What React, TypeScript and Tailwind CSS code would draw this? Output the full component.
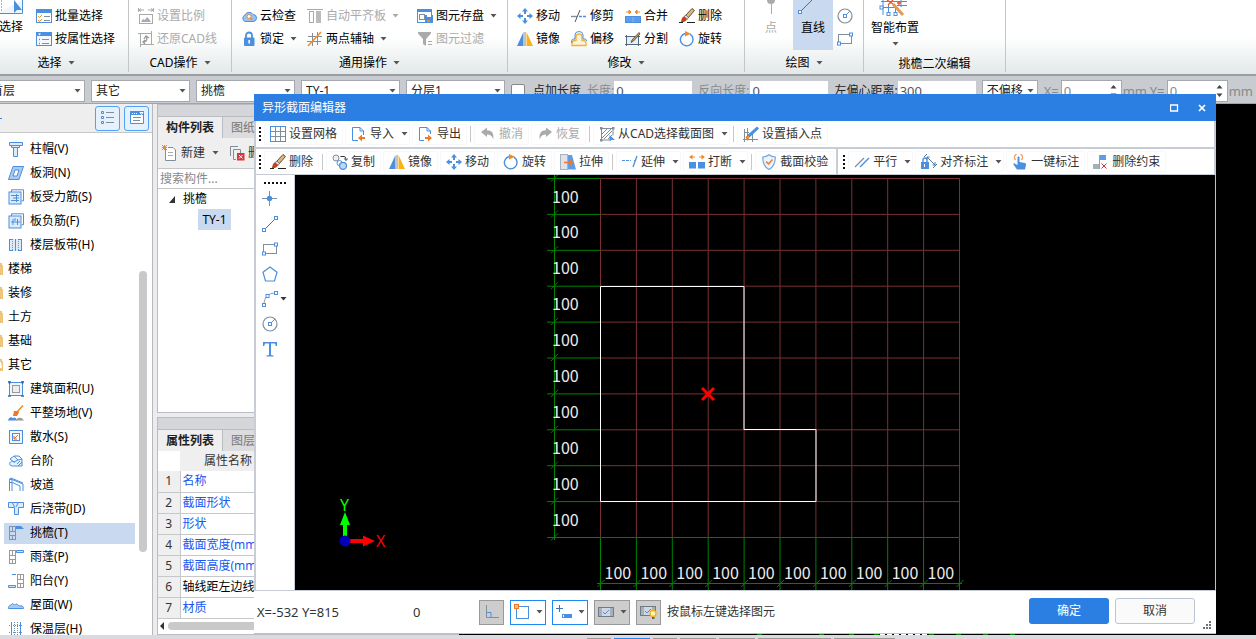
import React from "react";

const B = "#4a8fe0";
const G = "#7f8f9c";
const O = "#f08a24";

const node = (x: number, y: number) => (
  <rect x={x - 1.5} y={y - 1.5} width="3" height="3" fill="#fff" stroke={B} key={`${x}-${y}`} />
);

const ICONS: Record<string, React.ReactNode> = {
  batch: (
    <>
      <rect x=".5" y="1.5" width="15" height="13" fill="#fff" stroke={B} />
      <rect x="0" y="1" width="16" height="4" fill={B} />
      <path d="M2 8l1.5 1.5L6 7M2 12l1.5 1.5L6 11" fill="none" stroke={O} />
      <path d="M8 8.5h6M8 12.5h6" stroke={G} />
    </>
  ),
  byAttr: (
    <>
      <rect x=".5" y="1.5" width="15" height="13" fill="#f4f8fd" stroke={B} />
      <rect x="0" y="1" width="16" height="4" fill={B} />
      <path d="M2 2.5h3L3.500 4.500z" fill="#fff" />
      <path d="M6 8.500h7M6 12.500h7" stroke={G} />
      <path d="M3 8.500h1M3 12.500h1" stroke={B} strokeWidth="1.500" />
    </>
  ),
  scale: (
    <>
      <path d="M.5 0v4M15.500 0v4M1 2h5M10 2h5M3 .5L1 2l2 1.500M13 .5L15 2l-2 1.500" fill="none" stroke="#aaa" />
      <rect x="1.500" y="6.500" width="13" height="9" fill="#fff" stroke="#aaa" />
      <path d="M3 14l2-3 2 1 2-3 2 2 2 3z" fill="#aaa" />
    </>
  ),
  restore: (
    <>
      <path d="M2.500 2v14M13.500 0v14M0 2.500h14M2 13.500h14" stroke="#aaa" />
      <path d="M5 11c5 0 4-5 3-6M6 8l2-3 3 2M7 9l-2 2 2 2" fill="none" stroke="#999" strokeWidth="1.300" />
    </>
  ),
  cloud: (
    <>
      <path d="M4 13.500a3.500 3.500 0 0 1 0-6.500 4.500 4.500 0 0 1 8-.5 3.500 3.500 0 0 1 0 7z" fill="#9cc4f2" stroke={B} />
      <circle cx="8" cy="8.500" r="2" fill="#fff" stroke={O} />
      <path d="M9.500 10l2 2" stroke={O} strokeWidth="1.300" />
    </>
  ),
  lock: (
    <>
      <path d="M5 7V4.500a3 3 0 0 1 6 0V7" fill="none" stroke={B} strokeWidth="1.800" />
      <rect x="3" y="6.500" width="10.500" height="8.500" rx="1" fill={B} />
      <path d="M8.200 9v3.500" stroke="#fff" strokeWidth="1.600" />
    </>
  ),
  alignSlab: (
    <>
      <path d="M0 1.500h16" stroke="#aaa" />
      <rect x="2.500" y="3.500" width="4" height="11" fill="#fff" stroke="#aaa" />
      <rect x="9" y="3" width="5" height="12" fill="#bbb" />
    </>
  ),
  axis: (
    <>
      <path d="M5.500 2v13M10.500 1v13M1 5.500h14M0 10.500h14" stroke={G} fill="none" />
      <path d="M1 15L14 1" stroke={O} strokeWidth="1.400" />
    </>
  ),
  save: (
    <>
      <rect x=".5" y="1.500" width="14" height="13" fill="#fff" stroke={B} />
      <rect x="0" y="1" width="15" height="3" fill={B} />
      <rect x="2.500" y="6.500" width="5" height="5" fill="none" stroke={G} />
      <rect x="8" y="7" width="8" height="8" fill={B} />
      <rect x="10" y="7" width="4" height="2" fill="#fff" />
      <rect x="10" y="12" width="3" height="2" fill={O} />
    </>
  ),
  filter: (
    <>
      <path d="M1 1h13v1.500L9 8v7l-3-2V8L1 2.500z" fill="#aaa" />
      <path d="M11 10.500h4M11 13.500h4" stroke="#aaa" />
    </>
  ),
  move: (
    <>
      <path d="M8 0l3 3.500H9V6H7V3.500H5zM8 16l3-3.500H9V10H7v2.500H5zM0 8l3.500-3v2H6v2H3.500v2zM16 8l-3.500-3v2H10v2h2.500v2z" fill={B} />
    </>
  ),
  trim: (
    <>
      <path d="M0 8.500h6" stroke={G} strokeWidth="1.400" />
      <path d="M4 14L9 2" stroke="#555" />
      <path d="M8 8.500h8" stroke={B} strokeWidth="1.400" strokeDasharray="3 1" />
    </>
  ),
  merge: (
    <>
      <path d="M1 4h4M4 2l2 2-2 2zM15 4h-4M12 2l-2 2 2 2z" stroke={O} fill={O} />
      <rect x=".5" y="8.500" width="15" height="6" fill="#5b9de8" stroke={B} />
      <path d="M8 9v5" stroke="#85b8f0" />
    </>
  ),
  brush: (
    <>
      <path d="M13 .5l2.500 2L9 10 6.500 7.500z" fill="#d8b886" stroke="#6b4a2b" />
      <path d="M7 7l2.500 2.500L8 11.500 5 8.500z" fill="#ddd" stroke="#555" strokeWidth=".7" />
      <path d="M5.200 8.300l3 3C6.500 14 4 14.500 2 14c.3-2.500 1-4.500 3.200-5.700z" fill="#c4411e" />
      <path d="M0 14.500h4M8 14.500h8" stroke="#222" />
    </>
  ),
  mirror: (
    <>
      <path d="M6.500 1v14H0z" fill={B} />
      <path d="M8 1v14" stroke="#888" />
      <path d="M9.500 1v14H16z" fill="#f7b21c" />
    </>
  ),
  offset: (
    <>
      <path d="M1 14.500h14v-2a3 3 0 0 0-3-3h-1V6a3 3 0 1 0-6 0v3.500H4a3 3 0 0 0-3 3z" fill="#fdf3dc" stroke="#f2b432" strokeWidth="1.300" />
      <path d="M.7 12V10a2 2 0 0 1 2-2H4V4a4 3.500 0 0 1 8 0v4h2a2 2 0 0 1 1.500 2" fill="none" stroke={B} />
    </>
  ),
  split: (
    <>
      <rect x="1.500" y="5.500" width="12" height="8" fill="#e4eefa" stroke="#52687c" />
      <path d="M0 5.500h15M1.500 4v11M13.500 4v11M0 13.500h16" stroke="#52687c" />
      <path d="M14 1.500L7 9l-1 2.500L8.500 10 15 3z" fill="#c59a5f" stroke="#444" strokeWidth=".8" />
    </>
  ),
  rotate: (
    <>
      <path d="M11 3.200A6.300 6.300 0 1 1 6 2.500" fill="none" stroke={B} strokeWidth="1.400" />
      <path d="M6 0l6 2.700L6 5.500z" fill={O} />
    </>
  ),
  circle: (
    <>
      <circle cx="8" cy="8" r="7" fill="none" stroke={G} strokeWidth="1.200" />
      <path d="M8 8l5-5" stroke={G} />
      {node(8, 8)}
    </>
  ),
  rect: (
    <>
      <rect x="1.500" y="3.500" width="13" height="9" fill="none" stroke={G} />
      {node(14, 3.5)}
      {node(2, 12.5)}
    </>
  ),
  line: (
    <>
      <path d="M1.500 14.500l13-13" stroke="#666" />
      {node(2, 14)}
      {node(14, 2)}
    </>
  ),
  point: (
    <>
      <path d="M7.500 0v5M7.500 10v5M0 7.500h5M10 7.500h5" stroke={G} />
      <circle cx="7.500" cy="7.500" r="2.700" fill={B} />
    </>
  ),
  pentagon: <path d="M8 1l7 5.200L12.500 15h-9L1 6.200z" fill="none" stroke={B} strokeWidth="1.200" />,
  arc: (
    <>
      <path d="M2 14C2 6 6 2 14 2" fill="none" stroke="#999" />
      {node(2, 14)}
      {node(5.5, 5)}
      {node(14, 2)}
    </>
  ),
  textTool: <path d="M1 5V1h14v4h-1.200L13 2.500H9V14l2.500.5v1h-7v-1L7 14V2.500H3L2.200 5z" fill={B} />,
  grid: (
    <>
      <rect x=".5" y=".5" width="15" height="15" fill="#fff" stroke={B} />
      <path d="M5.500 1v14M10.500 1v14M1 5.500h14M1 10.500h14" stroke={G} />
      <rect x=".5" y=".5" width="15" height="15" fill="none" stroke={B} />
    </>
  ),
  importI: (
    <>
      <path d="M7 14.500H1.500v-13H9L12.500 5v4" fill="#fff" stroke={B} />
      <path d="M9 1.500V5h3.500" fill="none" stroke={B} />
      <path d="M7 12l4-3.500V11h3v2h-3v2.500z" fill="#f07826" />
    </>
  ),
  exportI: (
    <>
      <path d="M6 14.500H1.500v-13H9L12.500 5v3" fill="#fff" stroke={B} />
      <path d="M9 1.500V5h3.500" fill="none" stroke={B} />
      <path d="M14 12l-4-3.500V11H7v2h3v2.500z" fill="#f07826" />
    </>
  ),
  undo: <path d="M1 6l6-4.500V4.300c5 0 7 3 6.300 9C12 9.800 10 8.500 7 8.500V11z" fill="#aaa" />,
  redo: <path d="M15 6L9 1.500V4.300c-5 0-7 3-6.300 9C4 9.800 6 8.500 9 8.500V11z" fill="#aaa" />,
  cadPick: (
    <>
      <path d="M2.500 2v12h8M2 2.500h12v7" fill="none" stroke={G} />
      <path d="M3 8l5-5M3 12l9-9M5 13l8-8M9 13l4-4" stroke={G} />
      <rect x="1" y="1" width="2.500" height="2.500" fill={G} />
      <rect x="13" y="1" width="2.500" height="2.500" fill={G} />
      <rect x="1" y="13" width="2.500" height="2.500" fill={G} />
      <path d="M10.500 9v6.500l2-1.500H16z" fill={B} />
    </>
  ),
  insertPt: (
    <>
      <path d="M4.500 2v12.500M9.500 8v8M1 6.500h5M0 13.500h15M1.500 3v13" stroke={G} fill="none" />
      <path d="M14 .5l2 2L7 11l-3 1 1-3.500z" fill={B} />
      <circle cx="4.500" cy="11.500" r="1.800" fill={O} />
    </>
  ),
  copy: (
    <>
      <circle cx="4" cy="4" r="3" fill="#eee" stroke={G} />
      <path d="M8.500 2.500H12q2 0 2 3M12.300 4.500L14 6.500l1.800-2" fill="none" stroke="#333" />
      <circle cx="7.500" cy="9" r="2.500" fill="#fff" stroke={B} />
      <circle cx="11" cy="11.800" r="3.500" fill="#bcd8f6" stroke={B} strokeWidth="1.300" />
    </>
  ),
  stretch: (
    <>
      <rect x=".5" y=".5" width="7" height="15" fill="#dfe3e8" stroke="#a9b3bd" />
      <path d="M8 1h4l4 14.500H8z" fill="#5b9de8" />
      <path d="M4 8.500h8M9.500 6l2.500 2.500L9.500 11" fill="none" stroke="#f07826" strokeWidth="1.400" />
    </>
  ),
  extend: (
    <>
      <path d="M0 6.500h9" stroke={B} strokeDasharray="3 1" />
      <path d="M12 6.500h2" stroke={G} />
      <path d="M11 13l4-11" stroke={B} strokeWidth="1.300" />
    </>
  ),
  brk: (
    <>
      <path d="M2.500 3H6M10 3h3.500" stroke={O} />
      <path d="M3.500 .5v5L0 3zM12.500 .5v5L16 3z" fill={O} />
      <rect x="0" y="8" width="7" height="6.500" fill={B} />
      <rect x="9" y="8" width="7" height="6.500" fill={B} />
    </>
  ),
  shield: (
    <>
      <path d="M8 .8c2 1.700 4 2.200 6.300 2.200 0 6-1.300 10-6.300 12.500C3 13 1.700 9 1.700 3 4 3 6 2.500 8 .8z" fill="#edf4fc" stroke="#6fa5e2" strokeWidth="1.200" />
      <path d="M5 7.500L7.500 10 11.500 5.500" fill="none" stroke="#f07826" strokeWidth="1.500" />
    </>
  ),
  parallel: (
    <>
      <path d="M1 13L10 4" stroke={G} strokeWidth="1.300" />
      <path d="M6 13l9-9" stroke={B} strokeWidth="1.500" />
    </>
  ),
  alignDim: (
    <>
      <rect x="0" y="8" width="8" height="7" fill={B} />
      <path d="M2 8V6a2 2 0 0 1 4 0v2" fill="none" stroke={B} strokeWidth="1.400" />
      <path d="M3.500 10v3" stroke="#fff" />
      <path d="M3 3L6 0M6 3l8 8M6 5.500V3h2.500M14 8v3h-2.500M12 14l4-4" fill="none" stroke="#52789f" />
    </>
  ),
  hand: (
    <>
      <path d="M3.500 6A4 4 0 1 1 9.500 6" fill="none" stroke="#f2a06a" strokeWidth="1.400" />
      <path d="M5.500 3.500c0-1.300 2-1.300 2 0V8l5.500 1c1 .3 1 1 1 2l-1 4.500H5L1.500 10.500c-.5-1 .5-1.500 1.500-.8L5.500 11z" fill={B} />
    </>
  ),
  delCon: (
    <>
      <rect x="7" y="1" width="6" height="5" fill="#5b9de8" />
      <rect x="0" y="10" width="6" height="5" fill="#a9afb8" />
      <path d="M6.500 1v14" stroke={O} />
      <path d="M8.500 9.500l5 5M13.500 9.500l-5 5" stroke="#c33" />
    </>
  ),
  colCap: (
    <path d="M1.500 1.500h13v3h-3v2h-2v9h-4v-9h-2v-2h-2zM3 4.500h9M5 6.500h5" fill="#dceafa" stroke={B} />
  ),
  slabHole: (
    <>
      <path d="M5 1.500h10.500L11 14.500H.5z" fill="#a9cbf2" stroke={B} />
      <path d="M7 5h4l-2 6H5z" fill="#fff" stroke={B} />
    </>
  ),
  rebar1: (
    <>
      <path d="M3.500 3V.8h12v11h-2" fill="none" stroke={B} />
      <rect x="1" y="3" width="12" height="12" fill="#dceafa" stroke={B} />
      <path d="M3 6.500h8M3 11.500h8M5 9h6M8.500 5v8" stroke={B} />
    </>
  ),
  rebar2: (
    <>
      <path d="M3.500 3V.8h12v11h-2" fill="none" stroke={B} />
      <rect x="1" y="3" width="12" height="12" fill="#dceafa" stroke={B} />
      <path d="M3 9h9M5 6v6M9.500 6v6M7 5v3" stroke={B} />
    </>
  ),
  strip: (
    <>
      <path d="M1 2h13v12H1z" fill="#dceafa" />
      <path d="M1.500 2v12M13.500 2v12M7.500 2v12M1 2.500h4M10 2.500h4M1 13.500h4M10 13.500h4" stroke={B} />
      <path d="M4.500 4v9M10.500 4v9" stroke={G} strokeDasharray="1 1" />
    </>
  ),
  area: (
    <>
      <rect x="1.500" y="1.500" width="13" height="13" fill="#eef5fd" stroke={B} />
      <rect x="4.500" y="4.500" width="7" height="7" fill="#eee" stroke="#999" />
      <path d="M0 1h3M1.500 0v3M13 1h3M14.500 0v3M0 15h3M13 15h3" stroke="#3a6fb0" strokeWidth="1.500" />
    </>
  ),
  site: (
    <>
      <path d="M0 15.500c1-4 4-4 5-2 1-2 3-1 4 2z" fill={B} />
      <path d="M8 15.500c1-3 5-4 8 0z" fill="#999" />
      <path d="M15 .5L9.500 6.500" stroke={O} strokeWidth="1.500" />
      <path d="M6 6h4l1 1.500L9 11H5z" fill="#f07826" />
    </>
  ),
  apron: (
    <>
      <rect x="1.500" y="1.500" width="13" height="13" fill="#eef5fd" stroke={B} />
      <rect x="4.500" y="4.500" width="7" height="7" fill="#fff" stroke={B} />
      <path d="M10 6l-4 4M6 7v3h3" stroke="#d86a2b" fill="none" />
    </>
  ),
  steps: (
    <path d="M2 6l4-3h5l3 3v7H4.500C2 13 1 11 2 9.500s4-2 4.500.5M2 6l4 3M6 3l4 4 4-1M6 9l4-2M10 13l4-4M9 11l3-3" fill="#e8f1fc" stroke={B} />
  ),
  ramp: (
    <path d="M1.500 14V2.500H4L15 7v7M4 2.500V14M1.500 5.500h3L12 9v5M1 2.500L3 1l12 5" fill="none" stroke={B} />
  ),
  pourStrip: (
    <path d="M.5 1.500h15v5h-5v7h-4v-7h-6zM10 2L8 6M6.500 6l-2-4" fill="#dceafa" stroke={B} />
  ),
  eave: (
    <>
      <path d="M1.500 1v14M7.500 1v14M1 1.500h7M1 6.500h7M1 10.500h7M1 14.500h7M4.500 1v5M4.500 10v4" stroke="#7b96b5" />
      <path d="M8 1h5l3 3H8z" fill={B} />
    </>
  ),
  canopy: (
    <>
      <path d="M1.500 1v14M7.500 1v14M1 1.500h7M1 6.500h7M1 10.500h7M1 14.500h7M4.500 1v5M4.500 10v4" stroke="#999" />
      <path d="M8.500 1.500h7v2h-7z" fill="#cfe2f8" stroke={B} />
    </>
  ),
  balcony: (
    <>
      <path d="M9.500 1v14M15.500 1v14M9 1.500h7M9 6.500h7M9 10.500h7M9 14.500h7M12.500 1v5M12.500 10v4" stroke="#999" />
      <path d="M4 1.500h4M.5 12.500h7v2h-7z" fill="#cfe2f8" stroke={B} />
    </>
  ),
  roof: <path d="M.5 11.500c0-4 3-3 4-5 1 0 1 2 3 1s2 0 3 1 5-1 5 3z" fill="#a9cbf2" stroke={B} />,
  insul: (
    <>
      <path d="M3.500 1v14M12.500 1v14" stroke={B} />
      <path d="M6.500 1v14M9.500 1v14M1 4.500h13M1 11.500h13" stroke="#6f8fb5" strokeDasharray="1 1" />
    </>
  ),
  newI: (
    <>
      <path d="M3.500 3v12.500h10V5L11 2.500H6" fill="#fff" stroke={G} />
      <path d="M6 7.500h5M6 10.500h5" stroke="#aaa" />
      <path d="M0 0l5 5M5 0L0 5M2.500 0v5M0 2.500h5" stroke={O} />
    </>
  ),
  delI: (
    <>
      <path d="M1.500 11V1.500H9M4.500 14.500v-10h7V8" fill="none" stroke={G} />
      <path d="M4.500 14.500H7" stroke={G} />
      <rect x="8" y="8" width="7.500" height="7.500" fill="#d9363e" />
      <path d="M10 10l3.500 3.500M13.500 10L10 13.500" stroke="#fff" />
    </>
  ),
};

function Icon({ name, className = "size-4" }: { name: string; className?: string }) {
  return (
    <svg viewBox="0 0 16 16" className={`${className} shrink-0`} aria-hidden="true">
      {ICONS[name]}
    </svg>
  );
}

function Caret({ className = "text-[#555]" }: { className?: string }) {
  return (
    <svg viewBox="0 0 7 4" className={`h-1 w-[7px] shrink-0 ${className}`} aria-hidden="true">
      <path d="M.5 0h6l-3 3.500z" fill="currentColor" />
    </svg>
  );
}

function RibbonButton({ icon, label, caret, disabled }: { icon: string; label: string; caret?: boolean; disabled?: boolean }) {
  return (
    <button type="button" disabled={disabled} className="flex h-[23px] items-center gap-[3px] whitespace-nowrap text-black disabled:text-[#aaa]">
      <Icon name={icon} />
      <span>{label}</span>
      {caret && <Caret className={disabled ? "ml-[3px] text-[#aaa]" : "ml-[3px] text-[#555]"} />}
    </button>
  );
}

function RibbonGroup({ title, caret = true, className, children }: { title: string; caret?: boolean; className: string; children: React.ReactNode }) {
  return (
    <section className={`flex shrink-0 flex-col border-r border-[#c4c7ca] pt-1 ${className}`}>
      <div className="flex h-[46px] items-start">{children}</div>
      <button type="button" className={caret
        ? "flex h-6 items-center justify-center gap-1.5 pt-1 whitespace-nowrap text-black"
        : "flex h-6 items-center justify-center pt-2 whitespace-nowrap text-black"}>
        {title}
        {caret && <Caret />}
      </button>
    </section>
  );
}

function Ribbon() {
  return (
    <header className="flex h-[76px] shrink-0 overflow-hidden border-b-2 border-[#9a9ea2] bg-linear-to-b from-white from-50% to-[#e3e8e8] pb-0.5">
      <RibbonGroup title="选择" className="-ml-4 w-[145px]">
        <button type="button" className="flex w-10 shrink-0 flex-col items-end pr-px text-black">
          <svg viewBox="0 0 26 14" className="-mt-1 h-3.5 w-[26px]" aria-hidden="true">
            <path d="M0 13.500h25.500V0" fill="#eef5fd" stroke={B} />
            <path d="M4.500 0v12" stroke="#f0b429" strokeDasharray="2 1" />
            <path d="M17 0v13l3-3h5z" fill={B} />
          </svg>
          <span className="leading-[26px]">选择</span>
        </button>
        <div className="ml-3 flex flex-col">
          <RibbonButton icon="batch" label="批量选择" />
          <RibbonButton icon="byAttr" label="按属性选择" />
        </div>
      </RibbonGroup>
      <RibbonGroup title="CAD操作" className="w-[103px]">
        <div className="ml-[9px] flex flex-col">
          <RibbonButton icon="scale" label="设置比例" disabled />
          <RibbonButton icon="restore" label="还原CAD线" disabled />
        </div>
      </RibbonGroup>
      <RibbonGroup title="通用操作" className="w-[276px]">
        <div className="ml-[9px] grid grid-flow-col grid-cols-[66px_110px_80px] grid-rows-2">
          <RibbonButton icon="cloud" label="云检查" />
          <RibbonButton icon="lock" label="锁定" caret />
          <RibbonButton icon="alignSlab" label="自动平齐板" caret disabled />
          <RibbonButton icon="axis" label="两点辅轴" caret />
          <RibbonButton icon="save" label="图元存盘" caret />
          <RibbonButton icon="filter" label="图元过滤" disabled />
        </div>
      </RibbonGroup>
      <RibbonGroup title="修改" className="w-[237px]">
        <div className="ml-[9px] grid grid-flow-col grid-cols-[repeat(4,54px)] grid-rows-2">
          <RibbonButton icon="move" label="移动" />
          <RibbonButton icon="mirror" label="镜像" />
          <RibbonButton icon="trim" label="修剪" />
          <RibbonButton icon="offset" label="偏移" />
          <RibbonButton icon="merge" label="合并" />
          <RibbonButton icon="split" label="分割" />
          <RibbonButton icon="brush" label="删除" />
          <RibbonButton icon="rotate" label="旋转" />
        </div>
      </RibbonGroup>
      <RibbonGroup title="绘图" className="w-[119px]">
        <button type="button" disabled className="-mt-1 ml-1.5 flex w-10 flex-col items-center text-[#aaa]">
          <svg viewBox="0 0 10 18" className="h-[18px] w-2.5" aria-hidden="true">
            <circle cx="5" cy="0" r="4" fill="#aaa" />
            <path d="M5.500 4v10" stroke="#aaa" />
          </svg>
          <span className="leading-5">点</span>
        </button>
        <button type="button" className="-mt-1 ml-0.5 flex h-[50px] w-10 flex-col items-center bg-[#c9d9f0] text-black">
          <svg viewBox="0 0 30 18" className="h-[18px] w-[30px]" aria-hidden="true">
            <path d="M2 12L14 0" stroke="#666" />
            {node(2, 12)}
          </svg>
          <span className="leading-5">直线</span>
        </button>
        <div className="ml-1 flex flex-col">
          <button type="button" aria-label="圆" className="flex h-[23px] items-center"><Icon name="circle" /></button>
          <button type="button" aria-label="矩形" className="flex h-[23px] items-center"><Icon name="rect" /></button>
        </div>
      </RibbonGroup>
      <RibbonGroup title="挑檐二次编辑" caret={false} className="w-[142px]">
        <button type="button" className="-mt-1 ml-[7px] flex flex-col items-center text-black">
          <svg viewBox="0 0 32 18" className="h-[18px] w-8" aria-hidden="true">
            <path d="M4 0v15M9.500 5v9M2 1.500h26M2 7.500h14M16.500 5v9M22 0v7M18 5.500h10" fill="none" stroke={B} />
            {node(2.5, 7.5)}
            {node(9.5, 14)}
            {node(16.5, 14)}
            <path d="M14 4l10 11" stroke="#e39a55" strokeWidth="3" />
            <path d="M8 0l6 4M14 0L9 5M18 3h4M20 1v4" stroke="#f0522b" strokeWidth="1.300" />
          </svg>
          <span className="leading-5">智能布置</span>
          <Caret className="mt-1 text-[#555]" />
        </button>
      </RibbonGroup>
    </header>
  );
}

function Combo({ label, value, className }: { label: string; value: string; className: string }) {
  return (
    <div className={`relative shrink-0 ${className}`}>
      <select aria-label={label} className="block h-[22px] w-full appearance-none border border-[#a5a9ae] bg-white pl-1 leading-5 text-[#222]">
        <option>{value}</option>
      </select>
      <span className="pointer-events-none absolute top-[9px] right-1 flex"><Caret /></span>
    </div>
  );
}

function Offset({ id, label }: { id: string; label: string }) {
  return (
    <div className="flex items-center text-[#8a8a8a]">
      <label htmlFor={id} className="w-[17px] text-[13px]">{label}</label>
      <div className="flex w-[61px] items-center border border-[#a5a9ae] bg-white">
        <input id={id} defaultValue="0" className="h-5 w-full min-w-0 pl-0.5 text-[13px]" />
        <svg viewBox="0 0 7 12" className="mr-1 h-3 w-[7px] shrink-0 text-[#444]" aria-hidden="true">
          <path d="M0.500 3.500L3.500 0l3 3.500zM.5 8.500l3 3.500 3-3.500z" fill="currentColor" />
        </svg>
      </div>
      <span className="ml-px w-[27px] text-[13px]">mm</span>
    </div>
  );
}

function ParameterBar() {
  return (
    <div className="flex h-7 shrink-0 items-center gap-1.5 overflow-hidden border-b border-[#a0a4a8] bg-[#c8cbd0] pt-0.5 whitespace-nowrap text-[#222]">
      <Combo label="楼层" value="首层" className="-ml-[14px] w-[99px]" />
      <Combo label="构件大类" value="其它" className="w-[99px]" />
      <Combo label="构件类型" value="挑檐" className="w-[99px]" />
      <Combo label="构件" value="TY-1" className="w-[99px]" />
      <Combo label="分层" value="分层1" className="w-[99px]" />
      <label className="flex items-center gap-2">
        <input type="checkbox" className="size-3.5 appearance-none rounded-xs border border-[#888] bg-white" />
        点加长度
      </label>
      <label className="flex items-center text-[#8a8a8a]">
        长度:
        <input defaultValue="0" className="h-5 w-[78px] bg-white pl-0.5 text-[13px] text-[#555]" />
      </label>
      <label className="flex items-center gap-px text-[#8a8a8a]">
        反向长度:
        <input defaultValue="0" className="h-5 w-[78px] bg-white pl-0.5 text-[13px] text-[#555]" />
      </label>
      <label className="flex items-center">
        左偏心距离:
        <input defaultValue="300" className="h-5 w-[78px] bg-white pl-0.5 text-[13px] text-[#555]" />
      </label>
      <Combo label="偏移方式" value="不偏移" className="w-14" />
      <div className="flex">
        <Offset id="offset-x" label="X=" />
        <Offset id="offset-y" label="Y=" />
      </div>
    </div>
  );
}

type NavRow = { text: string; icon?: string; open?: boolean; active?: boolean };
const NAV: NavRow[] = [
  { text: "柱帽(V)", icon: "colCap" },
  { text: "板洞(N)", icon: "slabHole" },
  { text: "板受力筋(S)", icon: "rebar1" },
  { text: "板负筋(F)", icon: "rebar2" },
  { text: "楼层板带(H)", icon: "strip" },
  { text: "楼梯" },
  { text: "装修" },
  { text: "土方" },
  { text: "基础" },
  { text: "其它", open: true },
  { text: "建筑面积(U)", icon: "area" },
  { text: "平整场地(V)", icon: "site" },
  { text: "散水(S)", icon: "apron" },
  { text: "台阶", icon: "steps" },
  { text: "坡道", icon: "ramp" },
  { text: "后浇带(JD)", icon: "pourStrip" },
  { text: "挑檐(T)", icon: "eave", active: true },
  { text: "雨蓬(P)", icon: "canopy" },
  { text: "阳台(Y)", icon: "balcony" },
  { text: "屋面(W)", icon: "roof" },
  { text: "保温层(H)", icon: "insul" },
];

function Navigator() {
  return (
    <nav className="flex w-[153px] shrink-0 flex-col overflow-hidden border-r border-[#b5b8bc] bg-white">
      <div className="flex h-[29px] shrink-0 items-center justify-end gap-1 border-b border-[#c4c6c8] bg-[#eeeeee] pr-[3px]">
        <span className="mr-auto h-px w-0.5 bg-[#2f86e8]" />
        <button type="button" aria-label="列表视图" className="flex size-[25px] items-center justify-center rounded-[3px] border border-[#4fa3f5] bg-[#e5f1fd]">
          <svg viewBox="0 0 16 16" className="size-4" fill="none" aria-hidden="true">
            <path d="M1.500 1.500h2v2h-2zM1.500 6.500h2v2h-2zM1.500 11.500h2v2h-2z" stroke={B} />
            <path d="M6 2.500h8M6 7.500h8M6 12.500h8" stroke={G} />
          </svg>
        </button>
        <button type="button" aria-label="窗口视图" className="flex size-[25px] items-center justify-center rounded-[3px] border border-[#4fa3f5] bg-[#e5f1fd]">
          <svg viewBox="0 0 16 16" className="size-4" fill="none" aria-hidden="true">
            <path d="M1.500 2v11.500h13V2" fill="#fff" stroke={B} />
            <path d="M1 1h14v4H1z" fill={B} />
            <path d="M3 3.500h1M5 3.500h1M7 3.500h1M11 2.500h3l-1.500 2z" stroke="#fff" />
            <path d="M4 7.500h8M4 10.500h7" stroke={G} />
          </svg>
        </button>
      </div>
      <div className="relative min-h-0 flex-1 overflow-hidden pt-1">
        <ul className="leading-3">
          {NAV.map((row) => (
            <li key={row.text} className="flex h-6 items-center">
              {row.icon ? (
                <a href="#" className={row.active ? "ml-1 flex h-[21px] w-[131px] items-center gap-1.5 bg-[#c9d9f0] pl-1 text-black" : "ml-1 flex h-[21px] w-[131px] items-center gap-1.5 pl-1 text-black"}>
                  <Icon name={row.icon} />
                  {row.text}
                </a>
              ) : (
                <a href="#" className="flex items-center gap-[5px] text-black">
                  <svg viewBox="0 0 3 12" className="h-3 w-[3px]" aria-hidden="true">
                    <path d="M0 0h2v2h1v10H0z" fill="#efc57b" />
                    {row.open && <path d="M0 3h1l1 6H0z" fill="#fff" />}
                  </svg>
                  {row.text}
                </a>
              )}
            </li>
          ))}
        </ul>
        <span className="absolute top-[138px] right-[5px] h-[281px] w-2 rounded-full bg-[#c9c9c9]" />
      </div>
    </nav>
  );
}

function Tabs({ items }: { items: string[] }) {
  return (
    <div className="mt-[11px] flex h-[22px] shrink-0 border-t border-[#b9bcc1] bg-[#dcdcde]">
      {items.map((t, i) => (
        <button type="button" key={t} className={i === 0 ? "w-16 bg-[#efefef] font-bold text-[#222]" : "w-[65px] border-l border-[#b9bcc1] text-[#777]"}>
          {t}
        </button>
      ))}
    </div>
  );
}

const PROPS: [string, string][] = [
  ["名称", "text-[#1658f0]"],
  ["截面形状", "text-[#1658f0]"],
  ["形状", "text-[#1658f0]"],
  ["截面宽度(mm)", "text-[#1658f0]"],
  ["截面高度(mm)", "text-[#1658f0]"],
  ["轴线距左边线距离(mm)", "text-black"],
  ["材质", "text-[#1658f0]"],
];

function SidePanels() {
  return (
    <div className="ml-1 flex w-[302px] shrink-0 flex-col overflow-hidden">
      <section className="flex h-[309px] shrink-0 flex-col border border-[#b9bcc1] bg-[#d4d6da]">
        <Tabs items={["构件列表", "图纸管理"]} />
        <div className="flex h-[31px] shrink-0 items-center border-b border-[#c4c6c8] bg-[#efefef] pl-1 text-[#333]">
          <button type="button" className="flex items-center gap-[3px]">
            <Icon name="newI" />
            <span>新建</span>
            <Caret className="ml-1 text-[#555]" />
          </button>
          <button type="button" className="ml-2.5 flex items-center gap-[3px]">
            <Icon name="delI" />
            <span>删除</span>
          </button>
        </div>
        <input aria-label="搜索构件" placeholder="搜索构件..." className="h-5 shrink-0 border-b border-[#c4c6c8] bg-white pl-0.5 placeholder:text-[#888]" />
        <ul className="flex-1 bg-white text-black">
          <li className="flex h-5 items-center gap-2 pl-2.5">
            <svg viewBox="0 0 7 7" className="size-[7px]" aria-hidden="true"><path d="M7 0v7H1z" fill="#333" /></svg>
            挑檐
          </li>
          <li className="flex">
            <button type="button" className="ml-10 h-[21px] w-[33px] bg-[#c9d9f0]">TY-1</button>
          </li>
        </ul>
      </section>
      <section className="mt-1 flex min-h-0 flex-1 flex-col border border-[#b9bcc1] bg-[#d4d6da]">
        <Tabs items={["属性列表", "图层管理"]} />
        <table className="w-full shrink-0 table-fixed border-collapse bg-white text-left">
          <thead>
            <tr className="h-5">
              <th className="w-[22px] bg-white" />
              <th className="bg-[#efefef] pl-6 font-normal text-[#333]">属性名称</th>
            </tr>
          </thead>
          <tbody>
            {PROPS.map(([name, color], i) => (
              <tr key={name} className="h-[21px] border-b border-[#c6c8cb]">
                <td className="bg-[#efefef] text-center leading-5 text-[#333]">{i + 1}</td>
                <td className={`border-l border-[#c6c8cb] pl-0.5 leading-5 whitespace-nowrap ${color}`}>{name}</td>
              </tr>
            ))}
          </tbody>
        </table>
        <div className="flex flex-1 items-center gap-1 bg-white pl-0.5">
          <svg viewBox="0 0 4 8" className="h-2 w-1" aria-hidden="true"><path d="M4 0v8L0 4z" fill="#333" /></svg>
          <span className="h-2 flex-1 rounded-full bg-[#c9c9c9]" />
        </div>
      </section>
    </div>
  );
}

function Tool({ icon, label, caret, disabled }: { icon: string; label: string; caret?: boolean; disabled?: boolean }) {
  return (
    <button
      type="button"
      disabled={disabled}
      className={caret
        ? "flex h-[21px] shrink-0 items-center gap-[3px] rounded-xs border border-[#f8f8f8] pr-px pl-[5px] whitespace-nowrap text-[#333]"
        : "flex h-[21px] shrink-0 items-center gap-[3px] rounded-xs border border-[#f8f8f8] px-[5px] whitespace-nowrap text-[#333] disabled:text-[#aaa]"}
    >
      <Icon name={icon} />
      <span>{label}</span>
      {caret && <Caret className="ml-1 text-[#555]" />}
    </button>
  );
}

const Sep = () => <span className="mx-px h-4 w-px shrink-0 bg-[#c8c8c8]" />;
const Grip = () => (
  <svg viewBox="0 0 2 14" className="mr-px ml-[3px] h-3.5 w-0.5 shrink-0" aria-hidden="true">
    <path d="M0 0h2v2H0zM0 4h2v2H0zM0 8h2v2H0zM0 12h2v2H0z" fill="#111" />
  </svg>
);

const STEP = 35.9;
const GX = 305.5;
const GY = 3.5;
const TICKS = Array.from({ length: 11 }, (_, i) => i * STEP);
const CELLS = TICKS.slice(0, 10);

function Canvas() {
  return (
    <svg className="min-w-0 flex-1 border-r border-[#b4c4d8] bg-black" role="img" aria-label="截面绘图区">
      <g stroke="#7a3034">
        {TICKS.map((t) => (
          <React.Fragment key={t}>
            <path d={`M${GX + t} ${GY}v359`} />
            <path d={`M${GX} ${GY + t}h359`} />
          </React.Fragment>
        ))}
      </g>
      <g stroke="#008200">
        <path d="M259.500 0v365M302 408.500h365" />
        {TICKS.map((t) => (
          <React.Fragment key={t}>
            <path d={`M252 ${GY + t}h53.500M256 ${GY + t + 3}l7 -7`} />
            <path d={`M${GX + t} 363v52M${GX + t - 3} 412l7 -7`} />
          </React.Fragment>
        ))}
      </g>
      <g fill="#ececec" fontSize="16" fontFamily="'Noto Sans CJK SC', sans-serif">
        {CELLS.map((t) => (
          <React.Fragment key={t}>
            <text x="257" y={GY + t + 24}>100</text>
            <text x={GX + t + 4} y="404">100</text>
          </React.Fragment>
        ))}
      </g>
      <path d="M305.500 111.500h143.500v143h72v72H305.500z" fill="none" stroke="#fff" />
      <path d="M407 213l12 12M419 213l-12 12" stroke="#f00" strokeWidth="3" />
      <path d="M50 362V350" stroke="#0f0" strokeWidth="4" />
      <path d="M45 350l5-13 5 13z" fill="#0f0" />
      <path d="M50 366h20" stroke="#f00" strokeWidth="4" />
      <path d="M68 360.500l12 5.500-12 5.500z" fill="#f00" />
      <circle cx="50" cy="366" r="5.500" fill="#0000b8" />
      <text x="45" y="336" fill="#0f0" fontSize="16">Y</text>
      <text x="81" y="372" fill="#f00" fontSize="16">X</text>
    </svg>
  );
}

const DRAW: [string, string][] = [
  ["point", "点"],
  ["line", "直线"],
  ["rect", "矩形"],
  ["pentagon", "多边形"],
  ["arc", "弧"],
  ["circle", "圆"],
  ["textTool", "文字"],
];

function StatusBar() {
  const grey = "flex h-[25px] items-center justify-center gap-1.5 border border-[#999] bg-[#cdcdcd]";
  const blue = "flex h-[25px] items-center justify-center gap-1.5 border border-[#1e88f5] bg-white";
  return (
    <footer className="flex h-[43px] shrink-0 items-center border-t border-[#c8ccd4] bg-white pl-[3px] text-[#333]">
      <span className="w-[156px] text-[13px]">X=-532 Y=815</span>
      <span className="w-[66px] text-[13px]">0</span>
      <div className="flex shrink-0 gap-1.5">
        <button type="button" aria-label="正交" className={`${grey} w-[25px]`}>
          <svg viewBox="0 0 16 16" className="size-4" fill="none" aria-hidden="true">
            <path d="M2.500 1v12.500H15" stroke={G} />
            <path d="M3 8.500h4V13" stroke={B} />
          </svg>
        </button>
        <button type="button" aria-label="对象捕捉" className={`${blue} w-9`}>
          <svg viewBox="0 0 16 16" className="size-4" fill="none" aria-hidden="true">
            <rect x="2.500" y="2.500" width="12" height="12" stroke={B} />
            <rect x=".5" y=".5" width="4" height="4" fill="#f9b78c" stroke="#f07826" />
          </svg>
          <Caret />
        </button>
        <button type="button" aria-label="动态输入" className={`${blue} w-9`}>
          <svg viewBox="0 0 16 16" className="size-4" fill="none" aria-hidden="true">
            <path d="M0 4.500h7M3.500 1v7" stroke="#3d76b5" />
            <rect x="6" y="10" width="10" height="4" fill={B} />
            <path d="M7.500 11v2" stroke="#fff" />
          </svg>
          <Caret />
        </button>
        <button type="button" aria-label="显示约束" className={`${grey} w-9`}>
          <svg viewBox="0 0 16 16" className="size-4" fill="none" aria-hidden="true">
            <rect x=".5" y="3.500" width="15" height="9" fill="#aab0b5" stroke="#6f7c86" />
            <rect x="4" y="4" width="8" height="8" fill="#cfd8e2" />
            <path d="M5 8l2 2 4-4" stroke={B} />
          </svg>
          <Caret />
        </button>
        <button type="button" aria-label="提示" className={`${grey} w-[25px]`}>
          <svg viewBox="0 0 17 16" className="h-4 w-[17px]" fill="none" aria-hidden="true">
            <rect x=".5" y="2.500" width="15" height="9" fill="#aab0b5" stroke="#6f7c86" />
            <rect x="4" y="3" width="8" height="8" fill="#cfd8e2" />
            <path d="M5 7l2 2 4-4" stroke={B} />
            <circle cx="13" cy="9.500" r="3" fill="#fff3b8" stroke="#f0b41e" strokeWidth="1.300" />
            <path d="M12 14h2.500" stroke="#666" strokeWidth="2" />
          </svg>
        </button>
      </div>
      <span className="ml-1.5 whitespace-nowrap">按鼠标左键选择图元</span>
      <div className="ml-auto flex gap-1.5 pb-[3px]">
        <button type="button" className="h-[26px] w-20 rounded-[3px] bg-[#2b7fe3] text-white">确定</button>
        <button type="button" className="h-[26px] w-20 rounded-[3px] border border-[#bcc6d3] bg-[#fafafa] text-[#333]">取消</button>
      </div>
      <svg viewBox="0 0 8 8" className="mr-[5px] mb-1 ml-2 size-2 self-end" aria-hidden="true">
        <path d="M6 0h2v2H6zM3 3h2v2H3zM6 3h2v2H6zM0 6h2v2H0zM3 6h2v2H3zM6 6h2v2H6z" fill="#6b7280" />
      </svg>
    </footer>
  );
}

function SectionEditor() {
  return (
    <div role="dialog" aria-labelledby="editor-title" className="absolute top-[94px] right-10 bottom-[5px] left-[254px] flex flex-col overflow-hidden border-b border-[#b8c4d4] bg-[#c8ccd4]">
      <div className="flex h-[27px] shrink-0 items-center bg-[#2b7fe3] px-2 text-white">
        <h1 id="editor-title">异形截面编辑器</h1>
        <div className="ml-auto flex gap-4">
          <button type="button" aria-label="最大化" className="flex size-3 items-center justify-center">
            <svg viewBox="0 0 9 8" className="h-2 w-[9px]" aria-hidden="true"><path d="M.5 1h7v6h-7zM0 1h8" fill="none" stroke="#fff" strokeWidth="1.300" /></svg>
          </button>
          <button type="button" aria-label="关闭" className="flex size-3 items-center justify-center">
            <svg viewBox="0 0 8 8" className="size-2" aria-hidden="true"><path d="M1 1l6 6M7 1L1 7" stroke="#fff" strokeWidth="1.700" /></svg>
          </button>
        </div>
      </div>
      <div className="flex min-h-0 flex-1 flex-col border-l-2 border-[#c8ccd4]">
        <div className="mr-0.5 flex h-7 shrink-0 items-center gap-0.5 border-b-2 border-[#c8ccd4] bg-white">
          <Grip />
          <Tool icon="grid" label="设置网格" />
          <Tool icon="importI" label="导入" caret />
          <Tool icon="exportI" label="导出" />
          <Sep />
          <Tool icon="undo" label="撤消" disabled />
          <Tool icon="redo" label="恢复" disabled />
          <Sep />
          <Tool icon="cadPick" label="从CAD选择截面图" caret />
          <Sep />
          <Tool icon="insertPt" label="设置插入点" />
        </div>
        <div className="mr-0.5 flex h-[26px] shrink-0 items-center gap-0.5 border-b border-[#c8ccd4] bg-white">
          <Grip />
          <Tool icon="brush" label="删除" />
          <Sep />
          <Tool icon="copy" label="复制" />
          <Tool icon="mirror" label="镜像" />
          <Tool icon="move" label="移动" />
          <Tool icon="rotate" label="旋转" />
          <Tool icon="stretch" label="拉伸" />
          <Sep />
          <Tool icon="extend" label="延伸" caret />
          <Tool icon="brk" label="打断" caret />
          <Sep />
          <Tool icon="shield" label="截面校验" />
          <span className="w-0.5 shrink-0 self-stretch bg-[#c8ccd4]" />
          <Grip />
          <Tool icon="parallel" label="平行" caret />
          <Tool icon="alignDim" label="对齐标注" caret />
          <Tool icon="hand" label="一键标注" />
          <Tool icon="delCon" label="删除约束" />
        </div>
        <div className="flex min-h-0 flex-1">
          <div className="flex w-[39px] shrink-0 flex-col border-r border-[#c8ccd4] bg-white pt-[7px] pl-1">
            <svg viewBox="0 0 22 2" className="mb-0.5 ml-1 h-0.5 w-[22px]" aria-hidden="true">
              <path d="M0 1h22" stroke="#111" strokeWidth="2" strokeDasharray="2 2" />
            </svg>
            {DRAW.map(([icon, label]) => (
              <button type="button" key={icon} aria-label={label} className="flex h-[25px] items-center gap-0.5 pl-0.5">
                <Icon name={icon} />
                {icon === "arc" && <Caret className="text-[#333]" />}
              </button>
            ))}
          </div>
          <Canvas />
        </div>
      </div>
      <StatusBar />
    </div>
  );
}

export default function App() {
  return (
    <div className="relative flex h-screen flex-col overflow-hidden bg-[#c8cbd0] font-['Noto_Sans','Noto_Sans_CJK_SC',sans-serif] text-[12px] leading-4">
      <Ribbon />
      <ParameterBar />
      <main className="flex min-h-0 flex-1 bg-[#ececee]">
        <Navigator />
        <SidePanels />
        <div className="flex min-w-0 flex-1 items-end bg-black">
          <svg className="h-px w-full" aria-hidden="true">
            <path d="M298 .5h5M360 .5h5M390 .5h5M415 .5h5M470 .5h5M497 .5h5M524 .5h5M551 .5h5" stroke="#008200" />
            <path d="M421 .5h48" stroke="#fff" strokeDasharray="5 2" />
          </svg>
        </div>
      </main>
      <div className="flex h-1 shrink-0 items-end gap-[3px] bg-[#dcdadf] pl-[587px]">
        <span className="h-px w-6 bg-[#999]" />
        <span className="h-px w-9 bg-[#1e88f5]" />
        <span className="h-px w-6 bg-[#999]" />
        <span className="h-px w-9 bg-[#999]" />
        <span className="h-px w-9 bg-[#999]" />
        <span className="h-px w-[73px] bg-[#999]" />
        <span className="h-px w-[61px] bg-[#999]" />
      </div>
      <SectionEditor />
    </div>
  );
}
